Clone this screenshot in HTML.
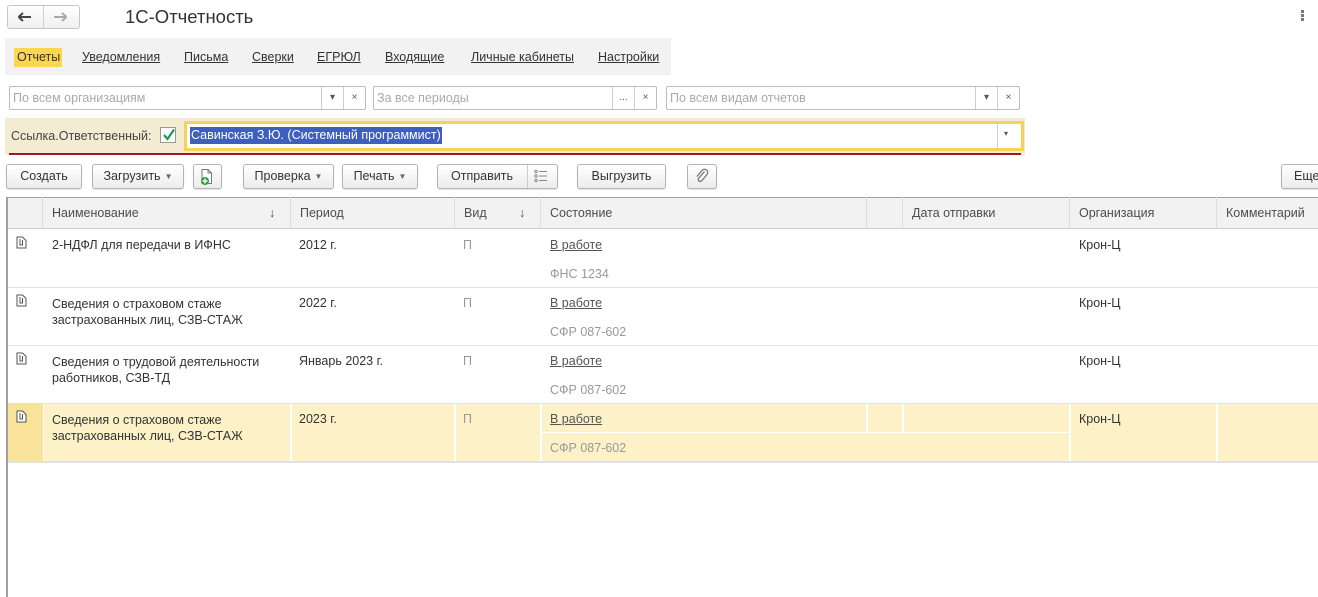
<!DOCTYPE html>
<html><head><meta charset="utf-8"><style>
*{box-sizing:border-box;margin:0;padding:0}
body{width:1318px;height:581px;overflow:hidden;background:#fff;font-family:"Liberation Sans",Arial,sans-serif;font-size:12.5px;color:#333;position:relative}
.a{position:absolute}
.btn{position:absolute;height:25px;border:1px solid #b4b4b4;border-radius:3px;background:linear-gradient(#fff,#ececec);box-shadow:0 1px 1px rgba(0,0,0,.12);text-align:center;line-height:23px;color:#333}
.dd{font-size:8px;color:#666;margin-left:4px;vertical-align:1px}
.fld{position:absolute;height:24px;border:1px solid #bdbdbd;border-radius:2px;background:#fff;color:#aaa;line-height:22px;padding-left:3px}
.fb{position:absolute;top:0;height:22px;border-left:1px solid #ccc;width:22px;text-align:center;color:#555;font-size:10px}
.nav a{color:#333;text-decoration:underline;position:absolute;top:50px}
.hd{position:absolute;top:197px;height:32px;line-height:32px;color:#4d4d4d;border-right:1px solid #ddd;padding-left:9px}
.c{position:absolute;color:#333}
.g{color:#999;position:absolute}
.u{position:absolute;color:#555;text-decoration:underline}
.hl{position:absolute;background:#fdf1c8}
.r{position:absolute;left:0;top:0;width:1318px;height:581px}
.r1{transform:translateY(1px)}
</style></head><body>
<div class="a" style="left:7px;top:5px;width:73px;height:24px;border:1px solid #c6c6c6;border-radius:3px;background:linear-gradient(#fff,#f0f0f0)"></div>
<div class="a" style="left:43px;top:6px;width:1px;height:22px;background:#d0d0d0"></div>
<svg class="a" style="left:17px;top:11px" width="16" height="12"><path d="M1.5 6H14M1.5 6L6 2M1.5 6L6 10" stroke="#444" stroke-width="2" fill="none"/></svg>
<svg class="a" style="left:53px;top:11px" width="16" height="12"><path d="M13.5 6H1M13.5 6L9 2M13.5 6L9 10" stroke="#aaa" stroke-width="2" fill="none"/></svg>
<div class="a" style="left:125px;top:6px;font-size:18.5px;color:#333">1С-Отчетность</div>
<div class="a" style="left:1301px;top:10px;width:3px;height:3px;background:#777"></div>
<div class="a" style="left:1301px;top:14px;width:3px;height:3px;background:#777"></div>
<div class="a" style="left:1301px;top:18px;width:3px;height:3px;background:#777"></div>
<div class="a" style="left:5px;top:38px;width:666px;height:37px;background:#f2f2f2"></div>
<div class="nav">
<span class="a" style="left:14px;top:48px;width:48px;height:19px;background:#fbd751"></span>
<span class="a" style="left:17px;top:50px;color:#333">Отчеты</span>
<a style="left:82px">Уведомления</a><a style="left:184px">Письма</a><a style="left:252px">Сверки</a><a style="left:317px">ЕГРЮЛ</a><a style="left:385px">Входящие</a><a style="left:471px">Личные кабинеты</a><a style="left:598px">Настройки</a>
</div>
<div class="fld" style="left:9px;top:86px;width:357px">По всем организациям<div class="fb" style="left:311px">▾</div><div class="fb" style="left:333px">×</div></div>
<div class="fld" style="left:373px;top:86px;width:284px">За все периоды<div class="fb" style="left:238px">...</div><div class="fb" style="left:260px">×</div></div>
<div class="fld" style="left:666px;top:86px;width:354px">По всем видам отчетов<div class="fb" style="left:308px">▾</div><div class="fb" style="left:330px">×</div></div>
<div class="a" style="left:5px;top:118px;width:1020px;height:37px;background:#f4ecd2"></div>
<div class="a" style="left:11px;top:129px;color:#444">Ссылка.Ответственный:</div>
<div class="a" style="left:160px;top:127px;width:16px;height:16px;border:1px solid #999;background:#fff"></div>
<svg class="a" style="left:160px;top:126px" width="18" height="18"><path d="M4 9L7.5 13L14 3.5" stroke="#1a9c4a" stroke-width="2.2" fill="none"/></svg>
<div class="a" style="left:184px;top:121px;width:840px;height:30px;border:3px solid #f5d25a;background:#fff"></div>
<div class="a" style="left:997px;top:124px;width:1px;height:24px;background:#ccc"></div>
<div class="a" style="left:1004px;top:129px;font-size:8px;color:#555">▾</div>
<div class="a" style="left:190px;top:127px;height:17px;line-height:17px;background:#3f5fbf;color:#fff;padding:0 1px">Савинская З.Ю. (Системный программист)</div>
<div class="a" style="left:9px;top:153px;width:1012px;height:2px;background:#9e1b1b"></div>
<div class="btn" style="left:6px;top:164px;width:76px">Создать</div>
<div class="btn" style="left:92px;top:164px;width:92px">Загрузить<span class="dd">▼</span></div>
<div class="btn" style="left:193px;top:164px;width:29px"></div>
<svg class="a" style="left:199px;top:168px" width="16" height="18"><path d="M3 1.5H9L12.5 5V15.5H3Z" fill="#fff" stroke="#777"/><path d="M9 1.5V5H12.5" fill="none" stroke="#777"/><circle cx="6" cy="13" r="4" fill="#2a9d3c"/><path d="M6 10.5V15.5M3.5 13H8.5" stroke="#fff" stroke-width="1.4"/></svg>
<div class="btn" style="left:243px;top:164px;width:91px">Проверка<span class="dd">▼</span></div>
<div class="btn" style="left:342px;top:164px;width:76px">Печать<span class="dd">▼</span></div>
<div class="btn" style="left:437px;top:164px;width:121px;text-align:left;padding-left:13px">Отправить</div>
<div class="a" style="left:527px;top:165px;width:1px;height:23px;background:#ccc"></div>
<svg class="a" style="left:534px;top:169px" width="14" height="14"><g fill="none" stroke="#888"><circle cx="2" cy="2.5" r="1.2"/><circle cx="2" cy="7" r="1.2"/><circle cx="2" cy="11.5" r="1.2"/><path d="M5 2.5H13M5 7H13M5 11.5H13"/></g></svg>
<div class="btn" style="left:577px;top:164px;width:89px">Выгрузить</div>
<div class="btn" style="left:687px;top:164px;width:30px"></div>
<svg class="a" style="left:694px;top:168px" width="16" height="16"><path d="M10.5 3.5L4.5 10.5A2 2 0 0 0 7.5 13L13 6.5A3.2 3.2 0 0 0 8.5 2L3 8.5" fill="none" stroke="#777" stroke-width="1.3"/></svg>
<div class="btn" style="left:1281px;top:164px;width:60px;text-align:left;padding-left:12px">Еще</div>
<div class="a" style="left:6px;top:197px;width:1320px;height:400px;border-left:2px solid #a0a0a0;border-top:1px solid #a0a0a0"></div>
<div class="a" style="left:8px;top:198px;width:1310px;height:31px;background:#f2f2f2;border-bottom:1px solid #ccc"></div>
<div class="hd" style="left:8px;width:35px"></div>
<div class="hd" style="left:43px;width:248px">Наименование<span style="position:absolute;left:226px">↓</span></div>
<div class="hd" style="left:291px;width:164px">Период</div>
<div class="hd" style="left:455px;width:86px">Вид<span style="position:absolute;left:64px">↓</span></div>
<div class="hd" style="left:541px;width:326px">Состояние</div>
<div class="hd" style="left:867px;width:36px"></div>
<div class="hd" style="left:903px;width:167px">Дата отправки</div>
<div class="hd" style="left:1070px;width:147px">Организация</div>
<div class="hd" style="left:1217px;width:101px;border-right:none">Комментарий</div>
<div class="hl" style="left:8px;top:404px;width:35px;height:57px;background:#f9e29a"></div>
<div class="hl" style="left:44px;top:404px;width:246px;height:57px"></div>
<div class="hl" style="left:292px;top:404px;width:162px;height:57px"></div>
<div class="hl" style="left:456px;top:404px;width:84px;height:57px"></div>
<div class="hl" style="left:542px;top:404px;width:324px;height:28px"></div>
<div class="hl" style="left:868px;top:404px;width:34px;height:28px"></div>
<div class="hl" style="left:904px;top:404px;width:165px;height:28px"></div>
<div class="hl" style="left:542px;top:433px;width:527px;height:28px"></div>
<div class="hl" style="left:1071px;top:404px;width:145px;height:57px"></div>
<div class="hl" style="left:1218px;top:404px;width:100px;height:57px"></div>
<div class="a" style="left:8px;top:287px;width:1310px;height:1px;background:#e2e2e2"></div>
<div class="a" style="left:8px;top:345px;width:1310px;height:1px;background:#e2e2e2"></div>
<div class="a" style="left:8px;top:403px;width:1310px;height:1px;background:#e2e2e2"></div>
<div class="a" style="left:8px;top:461px;width:1310px;height:2px;background:#e2e2e2"></div>
<svg class="a" style="left:16px;top:236px" width="11" height="13"><path d="M1 1H6.5L10 4.5V12H1Z" fill="#fff" stroke="#555"/><path d="M4 3V9H6.5V4" fill="none" stroke="#555"/></svg>
<svg class="a" style="left:16px;top:294px" width="11" height="13"><path d="M1 1H6.5L10 4.5V12H1Z" fill="#fff" stroke="#555"/><path d="M4 3V9H6.5V4" fill="none" stroke="#555"/></svg>
<svg class="a" style="left:16px;top:352px" width="11" height="13"><path d="M1 1H6.5L10 4.5V12H1Z" fill="#fff" stroke="#555"/><path d="M4 3V9H6.5V4" fill="none" stroke="#555"/></svg>
<svg class="a" style="left:16px;top:410px" width="11" height="13"><path d="M1 1H6.5L10 4.5V12H1Z" fill="#fff" stroke="#555"/><path d="M4 3V9H6.5V4" fill="none" stroke="#555"/></svg>
<div class="r r1">
<div class="c" style="left:52px;top:237px">2-НДФЛ для передачи в ИФНС</div>
<div class="c" style="left:299px;top:237px">2012 г.</div>
<div class="g" style="left:463px;top:237px">П</div>
<div class="u" style="left:550px;top:237px">В работе</div>
<div class="g" style="left:550px;top:266px">ФНС 1234</div>
<div class="c" style="left:1079px;top:237px">Крон-Ц</div>
<div class="c" style="left:52px;top:295px;line-height:16px">Сведения о страховом стаже<br>застрахованных лиц, СЗВ-СТАЖ</div>
<div class="c" style="left:299px;top:295px">2022 г.</div>
<div class="g" style="left:463px;top:295px">П</div>
<div class="u" style="left:550px;top:295px">В работе</div>
<div class="g" style="left:550px;top:324px">СФР 087-602</div>
<div class="c" style="left:1079px;top:295px">Крон-Ц</div>
<div class="c" style="left:52px;top:353px;line-height:16px">Сведения о трудовой деятельности<br>работников, СЗВ-ТД</div>
<div class="c" style="left:299px;top:353px">Январь 2023 г.</div>
<div class="g" style="left:463px;top:353px">П</div>
<div class="u" style="left:550px;top:353px">В работе</div>
<div class="g" style="left:550px;top:382px">СФР 087-602</div>
<div class="c" style="left:1079px;top:353px">Крон-Ц</div>
<div class="c" style="left:52px;top:411px;line-height:16px">Сведения о страховом стаже<br>застрахованных лиц, СЗВ-СТАЖ</div>
<div class="c" style="left:299px;top:411px">2023 г.</div>
<div class="g" style="left:463px;top:411px">П</div>
<div class="u" style="left:550px;top:411px">В работе</div>
<div class="g" style="left:550px;top:440px">СФР 087-602</div>
<div class="c" style="left:1079px;top:411px">Крон-Ц</div>
</div>
</body></html>
